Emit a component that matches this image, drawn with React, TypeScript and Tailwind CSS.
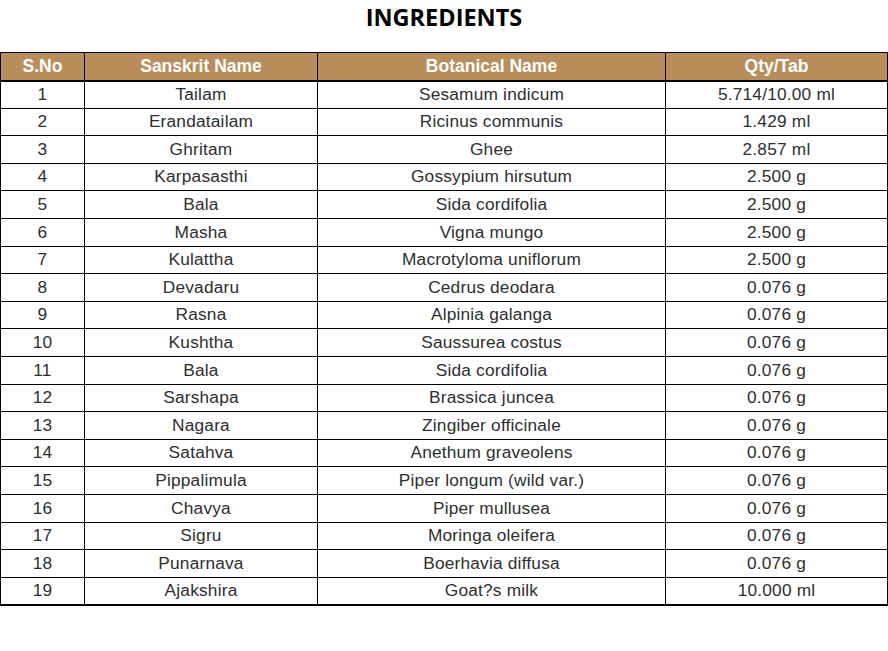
const ROWS: [string, string, string][] = [
  ['Tailam', 'Sesamum indicum', '5.714/10.00 ml'],
  ['Erandatailam', 'Ricinus communis', '1.429 ml'],
  ['Ghritam', 'Ghee', '2.857 ml'],
  ['Karpasasthi', 'Gossypium hirsutum', '2.500 g'],
  ['Bala', 'Sida cordifolia', '2.500 g'],
  ['Masha', 'Vigna mungo', '2.500 g'],
  ['Kulattha', 'Macrotyloma uniflorum', '2.500 g'],
  ['Devadaru', 'Cedrus deodara', '0.076 g'],
  ['Rasna', 'Alpinia galanga', '0.076 g'],
  ['Kushtha', 'Saussurea costus', '0.076 g'],
  ['Bala', 'Sida cordifolia', '0.076 g'],
  ['Sarshapa', 'Brassica juncea', '0.076 g'],
  ['Nagara', 'Zingiber officinale', '0.076 g'],
  ['Satahva', 'Anethum graveolens', '0.076 g'],
  ['Pippalimula', 'Piper longum (wild var.)', '0.076 g'],
  ['Chavya', 'Piper mullusea', '0.076 g'],
  ['Sigru', 'Moringa oleifera', '0.076 g'],
  ['Punarnava', 'Boerhavia diffusa', '0.076 g'],
  ['Ajakshira', 'Goat?s milk', '10.000 ml'],
];

export default function App() {
  const last = ROWS.length - 1;
  return (
    <div className="w-[888px] h-[651px] bg-white font-['Liberation_Sans',Arial,sans-serif]">
      <h1 className="h-[52px] text-center text-[23.5px] leading-[35px] font-bold text-black font-['Open_Sans',sans-serif]">
        INGREDIENTS
      </h1>
      <table className="w-[887px] table-fixed border-collapse border-[1.5px] border-black">
        <colgroup>
          <col className="w-[84px]" />
          <col className="w-[233px]" />
          <col className="w-[348px]" />
          <col className="w-[222px]" />
        </colgroup>
        <thead>
          <tr className="h-[28px] bg-[#ba8d5d] text-white text-[17.5px] font-bold leading-none">
            <th className="border border-black border-b-2">S.No</th>
            <th className="border border-black border-b-2">Sanskrit Name</th>
            <th className="border border-black border-b-2">Botanical Name</th>
            <th className="border border-black border-b-2">Qty/Tab</th>
          </tr>
        </thead>
        <tbody className="text-[17.3px] text-[#2e2e2e] tracking-[0.2px]">
          {ROWS.map(([sk, bot, qty], i) => {
            const cell = i === last ? 'border border-black border-b-2 text-center' : 'border border-black text-center';
            return (
              <tr key={i} className="h-[27.6px] leading-none">
                <td className={cell}>{i + 1}</td>
                <td className={cell}>{sk}</td>
                <td className={cell}>{bot}</td>
                <td className={cell}>{qty}</td>
              </tr>
            );
          })}
        </tbody>
      </table>
    </div>
  );
}
